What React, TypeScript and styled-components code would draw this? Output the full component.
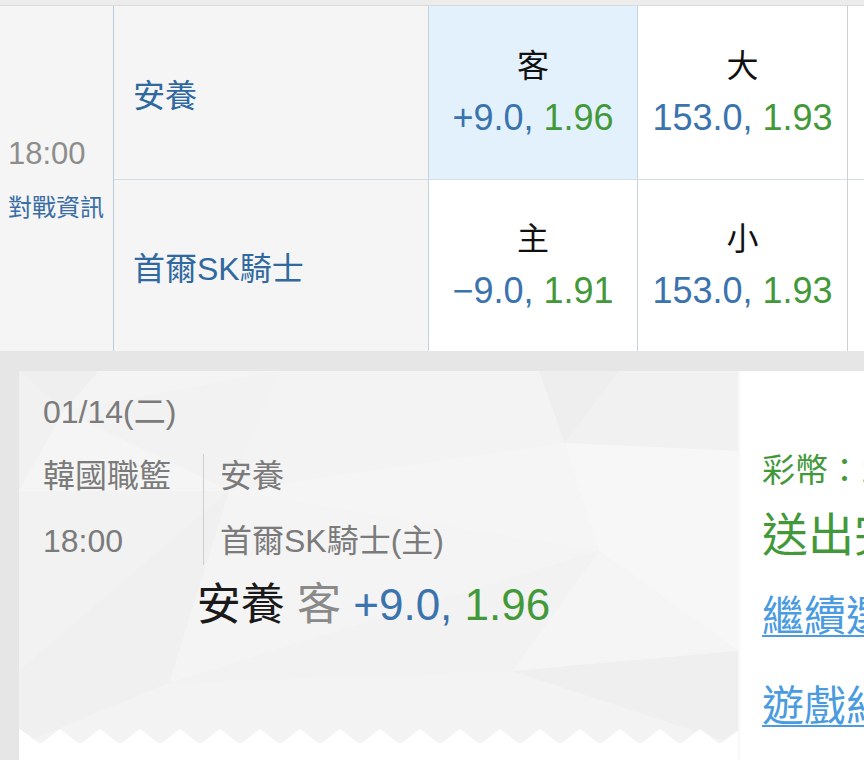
import styled, { createGlobalStyle } from "styled-components";

const GlobalStyle = createGlobalStyle`
  body {
    margin: 0;
    background: #ffffff;
    overflow: hidden;
    font-family: "Liberation Sans", "Noto Sans CJK TC", sans-serif;
  }
`;

interface Quote {
  label: string;
  line: string;
  price: string;
  picked?: boolean;
}

interface MatchRow {
  team: string;
  spread: Quote;
  total: Quote;
}

const rows: MatchRow[] = [
  {
    team: "安養",
    spread: { label: "客", line: "+9.0", price: "1.96", picked: true },
    total: { label: "大", line: "153.0", price: "1.93" },
  },
  {
    team: "首爾SK騎士",
    spread: { label: "主", line: "−9.0", price: "1.91" },
    total: { label: "小", line: "153.0", price: "1.93" },
  },
];

// low-poly facets behind the ticket
const facets: [string, string][] = [
  ["0,0 80,0 45,40", "#efefef"],
  ["0,0 45,40 0,120", "#f1f1f1"],
  ["80,0 260,0 45,40", "#f4f4f4"],
  ["45,40 260,0 210,120", "#f2f2f2"],
  ["0,120 45,40 210,120", "#f5f5f5"],
  ["260,0 520,0 546,72 210,120", "#f3f3f3"],
  ["520,0 600,0 546,72", "#eeeeee"],
  ["600,0 719,0 719,80 546,72", "#f1f1f1"],
  ["210,120 546,72 580,180", "#f5f5f5"],
  ["546,72 719,80 719,280 580,180", "#f7f7f7"],
  ["0,120 210,120 0,300", "#f2f2f2"],
  ["210,120 580,180 150,312", "#f4f4f4"],
  ["0,300 210,120 150,312", "#f0f0f0"],
  ["580,180 719,280 493,300", "#f5f5f5"],
  ["150,312 580,180 493,300", "#f2f2f2"],
  ["0,300 150,312 0,374", "#f0f0f0"],
  ["150,312 493,300 719,374 0,374", "#f3f3f3"],
  ["493,300 719,280 719,374", "#efefef"],
];

let zigzag = "M-19 15";
for (let x = -19; x < 740; x += 40) zigzag += ` L${x + 20} 0 L${x + 40} 15`;
zigzag += " Z";

export default function App() {
  return (
    <Page>
      <GlobalStyle />
      <TopStrip />
      <OddsGrid>
        <TimeCell>
          <Kickoff>18:00</Kickoff>
          <InfoLink>對戰資訊</InfoLink>
        </TimeCell>
        {rows.map((row, i) => {
          const first = i === 0;
          return [
            <TeamCell key={`t${i}`} $divider={first}>
              {row.team}
            </TeamCell>,
            <OddsCell key={`s${i}`} $divider={first} $picked={row.spread.picked} $edge="#c9d3dc">
              <Side>{row.spread.label}</Side>
              <Price>
                <Line>{row.spread.line}, </Line>
                <Odds>{row.spread.price}</Odds>
              </Price>
            </OddsCell>,
            <OddsCell key={`o${i}`} $divider={first} $edge="#cfcfcf">
              <Side>{row.total.label}</Side>
              <Price>
                <Line>{row.total.line}, </Line>
                <Odds>{row.total.price}</Odds>
              </Price>
            </OddsCell>,
            <SpareCell key={`x${i}`} $divider={first} />,
          ];
        })}
      </OddsGrid>
      <Band />
      <Lower>
        <Ticket>
          <Facets viewBox="0 0 719 374" preserveAspectRatio="none">
            {facets.map(([pts, fill], i) => (
              <polygon key={i} points={pts} fill={fill} />
            ))}
          </Facets>
          <TicketBody>
            <DateText>01/14(二)</DateText>
            <MatchInfo>
              <LeagueCol>
                <Muted>韓國職籃</Muted>
                <Muted>18:00</Muted>
              </LeagueCol>
              <TeamsCol>
                <Muted>安養</Muted>
                <Muted>首爾SK騎士(主)</Muted>
              </TeamsCol>
            </MatchInfo>
            <Pick>
              <PickTeam>安養</PickTeam> <PickSide>客</PickSide> <Line>+9.0, </Line>
              <Odds>1.96</Odds>
            </Pick>
          </TicketBody>
          <Zigzag viewBox="0 0 719 16" preserveAspectRatio="none">
            <path d={zigzag} fill="#ffffff" />
            <rect x="0" y="14" width="719" height="2" fill="#ffffff" />
          </Zigzag>
        </Ticket>
        <SidePanel>
          <Coins>彩幣：100</Coins>
          <Done>送出完成</Done>
          <ActionLink>繼續選擇</ActionLink>
          <ActionLink>遊戲紀錄</ActionLink>
        </SidePanel>
      </Lower>
    </Page>
  );
}

const Page = styled.div`
  width: 864px;
  height: 760px;
  overflow: hidden;
`;

const TopStrip = styled.div`
  height: 5px;
  background: #ececec;
  border-bottom: 1px solid #dadada;
`;

const OddsGrid = styled.div`
  display: grid;
  grid-template-columns: 114px 315px 209px 210px 60px;
  grid-template-rows: 174px 171px;
  width: 908px;
`;

const TimeCell = styled.div`
  grid-row: span 2;
  background: #f5f5f5;
  border-right: 1px solid #b9cbdc;
  display: flex;
  flex-direction: column;
  justify-content: center;
  padding-left: 8px;
  gap: 22px;
`;

const Kickoff = styled.div`
  font-size: 31px;
  line-height: 36px;
  color: #8d8d8d;
`;

const InfoLink = styled.div`
  font-size: 24px;
  line-height: 28px;
  color: #3a6ea5;
`;

const TeamCell = styled.div<{ $divider: boolean }>`
  background: #f5f5f5;
  border-right: 1px solid #c3d2df;
  border-bottom: ${(p) => (p.$divider ? "1px solid #d2dde8" : "none")};
  display: flex;
  align-items: center;
  padding-left: 19px;
  font-size: 32px;
  color: #3068a0;
`;

const OddsCell = styled.div<{ $divider: boolean; $picked?: boolean; $edge: string }>`
  background: ${(p) => (p.$picked ? "#e3f1fc" : "#ffffff")};
  border-right: 1px solid ${(p) => p.$edge};
  border-bottom: ${(p) => (p.$divider ? "1px solid #d6dee6" : "none")};
  display: flex;
  flex-direction: column;
  align-items: center;
  justify-content: center;
  gap: 12px;
`;

const SpareCell = styled.div<{ $divider: boolean }>`
  background: #ffffff;
  border-bottom: ${(p) => (p.$divider ? "1px solid #d6dee6" : "none")};
`;

const Side = styled.div`
  font-size: 32px;
  line-height: 38px;
  color: #111111;
`;

const Price = styled.div`
  font-size: 36px;
  line-height: 42px;
  white-space: nowrap;
`;

const Line = styled.span`
  color: #3a73ad;
`;

const Odds = styled.span`
  color: #43993a;
`;

const Band = styled.div`
  height: 20px;
  background: #e6e6e6;
`;

const Lower = styled.div`
  display: flex;
  border-left: 19px solid #e6e6e6;
  height: 389px;
  background: #ffffff;
`;

const Ticket = styled.div`
  position: relative;
  width: 719px;
  height: 374px;
  flex-shrink: 0;
  background: #f3f3f3;
  overflow: hidden;
`;

const Facets = styled.svg`
  position: absolute;
  inset: 0;
  width: 100%;
  height: 100%;
`;

const Zigzag = styled.svg`
  position: absolute;
  left: 0;
  bottom: 0;
  width: 100%;
  height: 16px;
`;

const TicketBody = styled.div`
  position: relative;
  padding: 19px 0 0 24px;
  color: #7b7b7b;
`;

const DateText = styled.div`
  font-size: 32px;
  line-height: 44px;
`;

const MatchInfo = styled.div`
  display: flex;
  margin-top: 20px;
`;

const LeagueCol = styled.div`
  display: flex;
  flex-direction: column;
  gap: 21px;
  width: 160px;
  border-right: 1px solid #cfcfcf;
  padding: 0 0 2px;
`;

const TeamsCol = styled.div`
  display: flex;
  flex-direction: column;
  gap: 21px;
  padding-left: 16px;
`;

const Muted = styled.div`
  font-size: 32px;
  line-height: 44px;
  white-space: nowrap;
`;

const Pick = styled.div`
  margin-top: 14px;
  padding-right: 34px;
  text-align: center;
  font-size: 44px;
  line-height: 52px;
  white-space: nowrap;
`;

const PickTeam = styled.span`
  color: #1a1a1a;
`;

const PickSide = styled.span`
  color: #8a8a8a;
`;

const SidePanel = styled.div`
  padding: 80px 0 0 24px;
  white-space: nowrap;
  box-shadow: inset 3px 0 4px -3px rgba(0, 0, 0, 0.08);
  flex: 1;
`;

const Coins = styled.div`
  font-size: 33px;
  line-height: 40px;
  color: #43993a;
`;

const Done = styled.div`
  margin-top: 16px;
  font-size: 46px;
  line-height: 56px;
  color: #43993a;
`;

const ActionLink = styled.div`
  margin-top: 26px;
  font-size: 42px;
  line-height: 56px;
  color: #4a9be0;
  text-decoration: underline;
  text-decoration-thickness: 2px;
  text-underline-offset: 4px;
  & + & {
    margin-top: 34px;
  }
`;
